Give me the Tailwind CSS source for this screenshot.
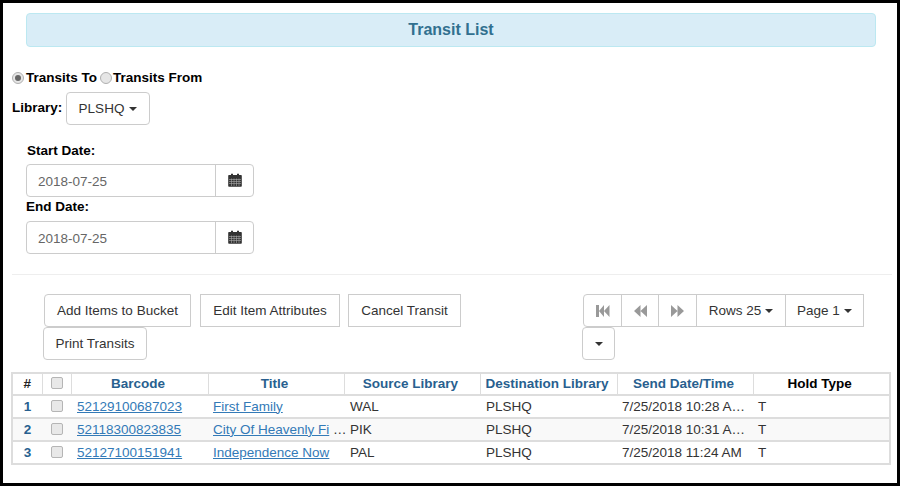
<!DOCTYPE html>
<html lang="en">
<head>
  <meta charset="UTF-8" />
  <title>Transit List</title>
  <script src="https://cdn.jsdelivr.net/npm/@tailwindcss/browser@4"></script>
</head>
<body class="bg-white">
  <div class="w-[900px] h-[486px] overflow-hidden border-[3px] border-black font-['Liberation_Sans',Arial,sans-serif] text-[13.5px] leading-[20px] text-[#333]">
    <!-- header -->
    <div class="mt-[10px] ml-[23px] w-[850px] h-[34px] flex items-center justify-center bg-[#d9edf7] border border-[#bce8f1] rounded text-[#31708f] text-[16px] font-bold">Transit List</div>

    <!-- transit direction -->
    <div class="mt-[21px] ml-[9px] flex items-center h-[20px] font-bold text-black">
      <span class="w-[12px] h-[12px] rounded-full border border-[#b0b0b0] bg-[#e6e6e6] flex items-center justify-center"><span class="w-[6px] h-[6px] rounded-full bg-[#666]"></span></span>
      <span class="ml-[2px]">Transits To</span>
      <span class="ml-[3px] w-[12px] h-[12px] rounded-full border border-[#b0b0b0] bg-[#e6e6e6]"></span>
      <span class="ml-[1px]">Transits From</span>
    </div>

    <div class="mt-[4px] ml-[9px] flex items-center">
      <span class="font-bold text-black w-[54px] pb-[2px]">Library:</span>
      <button class="w-[84px] h-[33px] pt-[1px] bg-white border border-[#ccc] rounded flex items-center justify-center gap-[5px]">PLSHQ <span class="border-x-[4px] border-t-[4px] border-x-transparent border-t-[#333]"></span></button>
    </div>

    <!-- dates -->
    <div class="mt-[16px] ml-[24px] font-bold text-black">Start Date:</div>
    <div class="mt-[3px] ml-[23px] w-[228px] h-[33px] flex border border-[#ccc] rounded">
      <div class="flex-1 pl-[11px] pt-[2px] flex items-center text-[#666]">2018-07-25</div>
      <div class="w-[38px] border-l border-[#ccc] flex items-center justify-center">
        <svg class="-mt-[2px]" width="14" height="14" viewBox="0 0 14 14"><path fill="#333" d="M1 2h2V0.8h2V2h4V0.8h2V2h2a.8.8 0 0 1 .8.8V13a.8.8 0 0 1-.8.8H1A.8.8 0 0 1 .2 13V2.8A.8.8 0 0 1 1 2z"/><path stroke="#aaa" stroke-width=".6" d="M1 6.500h12M1 8.500h12M1 10.500h12M3.500 5.500v7.500M6 5.500v7.500M8.500 5.500v7.500M11 5.500v7.500"/></svg>
      </div>
    </div>
    <div class="ml-[23px] h-[24px] pb-[4px] flex items-center font-bold text-black">End Date:</div>
    <div class="ml-[23px] w-[228px] h-[33px] flex border border-[#ccc] rounded">
      <div class="flex-1 pl-[11px] pt-[2px] flex items-center text-[#666]">2018-07-25</div>
      <div class="w-[38px] border-l border-[#ccc] flex items-center justify-center">
        <svg class="-mt-[2px]" width="14" height="14" viewBox="0 0 14 14"><path fill="#333" d="M1 2h2V0.8h2V2h4V0.8h2V2h2a.8.8 0 0 1 .8.8V13a.8.8 0 0 1-.8.8H1A.8.8 0 0 1 .2 13V2.8A.8.8 0 0 1 1 2z"/><path stroke="#aaa" stroke-width=".6" d="M1 6.500h12M1 8.500h12M1 10.500h12M3.500 5.500v7.500M6 5.500v7.500M8.500 5.500v7.500M11 5.500v7.500"/></svg>
      </div>
    </div>

    <hr class="mt-[20px] ml-[9px] w-[880px] border-t border-[#eee]" />

    <!-- toolbar -->
    <div class="mt-[19px] flex justify-between h-[66px]">
      <div class="w-[470px] pl-[41px]">
        <div class="flex">
          <button class="w-[147px] h-[33px] border border-[#ccc] rounded-l">Add Items to Bucket</button>
          <button class="ml-[9px] w-[140px] h-[33px] border border-[#ccc]">Edit Item Attributes</button>
          <button class="ml-[8px] w-[113px] h-[33px] border border-[#ccc]">Cancel Transit</button>
        </div>
        <button class="-ml-[1px] w-[104px] h-[33px] border border-[#ccc] rounded">Print Transits</button>
      </div>
      <div class="w-[300px] mr-[15px]">
        <div class="flex h-[33px] ml-[1px]">
          <button class="w-[39px] border border-[#ccc] rounded-l flex items-center justify-center">
            <svg width="14" height="12" viewBox="0 0 14 12"><path fill="#999" d="M0 0h3v12H0zM3 6l5-6v12zM8 6l5.500-6v12z"/></svg>
          </button>
          <button class="w-[38px] -ml-[1px] border border-[#ccc] flex items-center justify-center">
            <svg width="13" height="12" viewBox="0 0 13 12"><path fill="#999" d="M0 6l6.500-6v12zM6.500 6L13 0v12z"/></svg>
          </button>
          <button class="w-[39px] -ml-[1px] border border-[#ccc] flex items-center justify-center">
            <svg width="13" height="12" viewBox="0 0 13 12"><path fill="#999" d="M13 6L6.500 0v12zM6.500 6L0 0v12z"/></svg>
          </button>
          <button class="w-[90px] -ml-[1px] border border-[#ccc] flex items-center justify-center gap-[4px]">Rows 25 <span class="border-x-[4px] border-t-[4px] border-x-transparent border-t-[#333]"></span></button>
          <button class="w-[79px] -ml-[1px] border border-[#ccc] flex items-center justify-center gap-[4px]">Page 1 <span class="border-x-[4px] border-t-[4px] border-x-transparent border-t-[#333]"></span></button>
        </div>
        <button class="w-[33px] h-[33px] border border-[#ccc] rounded flex items-center justify-center"><span class="border-x-[4px] border-t-[4px] border-x-transparent border-t-[#333]"></span></button>
      </div>
    </div>

    <!-- table -->
    <table class="mt-[12px] ml-[8px] w-[878px] table-fixed border-collapse border-2 border-[#ddd]">
      <colgroup>
        <col class="w-[30px]" /><col class="w-[29px]" /><col class="w-[137px]" /><col class="w-[136px]" /><col class="w-[136px]" /><col class="w-[137px]" /><col class="w-[136px]" /><col class="w-[137px]" />
      </colgroup>
      <thead class="font-bold text-[#285f8f] text-center">
        <tr class="h-[22px] border-b-2 border-[#ddd]">
          <th class="border border-[#ddd] text-[#222]">#</th>
          <th class="border border-[#ddd]"><input type="checkbox" class="appearance-none block mx-auto -mt-[2px] w-[12px] h-[12px] bg-[#e8e8e8] border border-[#b5b5b5] rounded-[2px]" /></th>
          <th class="border border-[#ddd] pr-[3px]">Barcode</th>
          <th class="border border-[#ddd] pr-[3px]">Title</th>
          <th class="border border-[#ddd] pr-[3px]">Source Library</th>
          <th class="border border-[#ddd] pr-[3px]">Destination Library</th>
          <th class="border border-[#ddd] pr-[3px]">Send Date/Time</th>
          <th class="border border-[#ddd] pr-[3px] text-black">Hold Type</th>
        </tr>
      </thead>
      <tbody>
        <tr class="h-[23px] border-b-2 border-[#ddd]">
          <td class="text-center font-bold text-[#285f8f]">1</td>
          <td class="text-center"><input type="checkbox" class="appearance-none align-[-1px] w-[12px] h-[12px] bg-[#e8e8e8] border border-[#b5b5b5] rounded-[2px]" /></td>
          <td class="pl-[6px]"><a href="#" class="text-[#337ab7] underline">52129100687023</a></td>
          <td class="pl-[5px]"><a href="#" class="text-[#337ab7] underline">First Family</a></td>
          <td class="pl-[6px]">WAL</td>
          <td class="pl-[6px]">PLSHQ</td>
          <td class="pl-[5px]">7/25/2018 10:28 A…</td>
          <td class="pl-[5px]">T</td>
        </tr>
        <tr class="h-[23px] border-b-2 border-[#ddd] bg-[#f9f9f9]">
          <td class="text-center font-bold text-[#285f8f]">2</td>
          <td class="text-center"><input type="checkbox" class="appearance-none align-[-1px] w-[12px] h-[12px] bg-[#e8e8e8] border border-[#b5b5b5] rounded-[2px]" /></td>
          <td class="pl-[6px]"><a href="#" class="text-[#337ab7] underline">52118300823835</a></td>
          <td class="pl-[5px] whitespace-nowrap"><a href="#" class="text-[#337ab7] underline">City Of Heavenly Fi</a> …</td>
          <td class="pl-[6px]">PIK</td>
          <td class="pl-[6px]">PLSHQ</td>
          <td class="pl-[5px]">7/25/2018 10:31 A…</td>
          <td class="pl-[5px]">T</td>
        </tr>
        <tr class="h-[23px]">
          <td class="text-center font-bold text-[#285f8f]">3</td>
          <td class="text-center"><input type="checkbox" class="appearance-none align-[-1px] w-[12px] h-[12px] bg-[#e8e8e8] border border-[#b5b5b5] rounded-[2px]" /></td>
          <td class="pl-[6px]"><a href="#" class="text-[#337ab7] underline">52127100151941</a></td>
          <td class="pl-[5px]"><a href="#" class="text-[#337ab7] underline">Independence Now</a></td>
          <td class="pl-[6px]">PAL</td>
          <td class="pl-[6px]">PLSHQ</td>
          <td class="pl-[5px]">7/25/2018 11:24 AM</td>
          <td class="pl-[5px]">T</td>
        </tr>
      </tbody>
    </table>
  </div>
</body>
</html>
